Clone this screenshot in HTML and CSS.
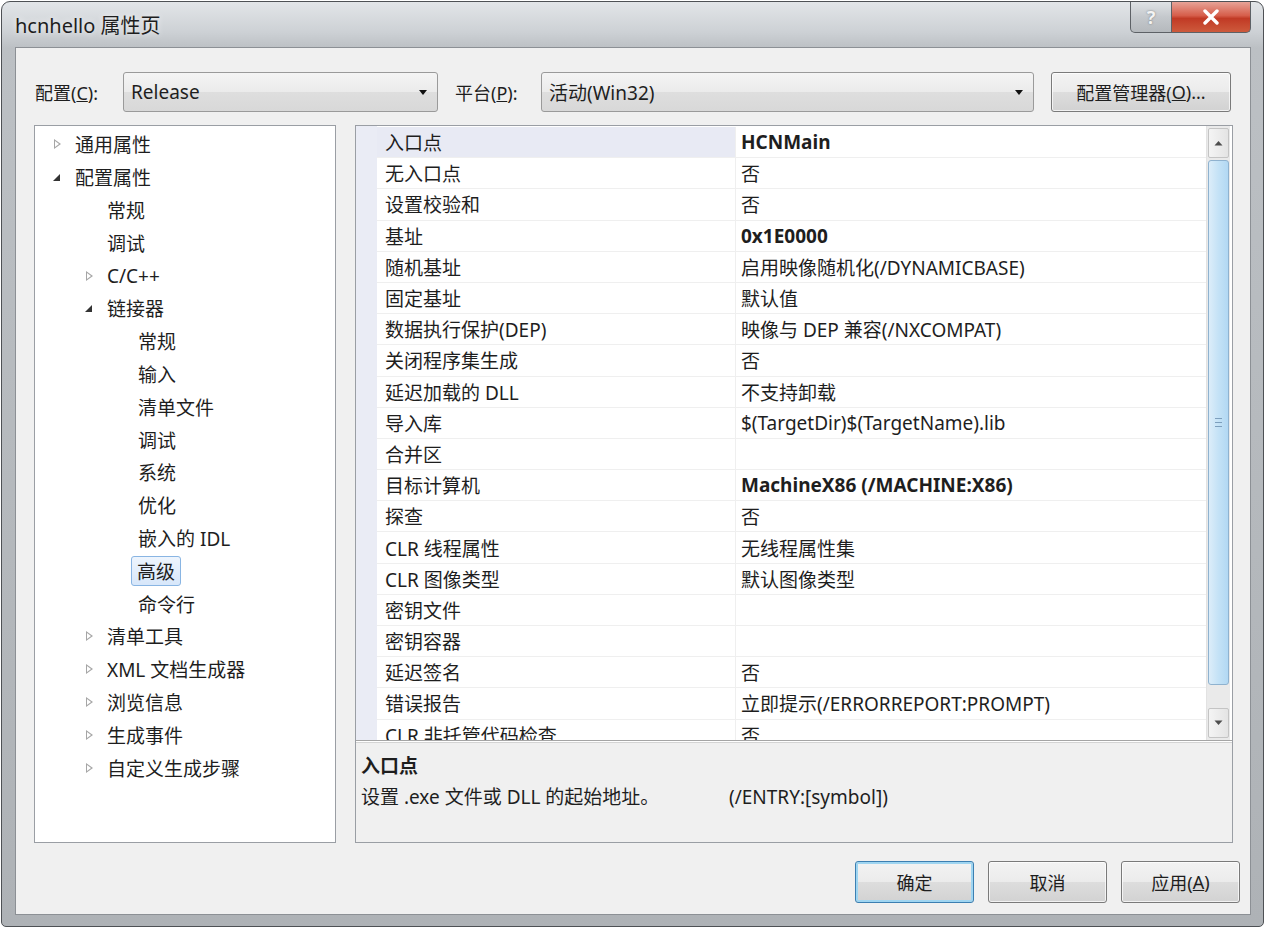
FILE: index.html
```html
<!DOCTYPE html>
<html lang="zh-CN">
<head>
    <meta charset="UTF-8">
    <title>hcnhello 属性页</title>
    <link rel="stylesheet" href="styles.css">
</head>
<body>
    <div class="window">
        <div class="titlebar">
            <div class="title">hcnhello 属性页</div>
            <div class="caption-buttons">
                <div class="cap-btn help">?</div>
                <div class="cap-btn close">
                    <svg width="18" height="16" viewBox="0 0 18 16"><path d="M3 2 L15 14 M15 2 L3 14" stroke="#fff" stroke-width="3.4" stroke-linecap="round"/></svg>
                </div>
            </div>
        </div>

        <div class="client">
            <div class="toolbar">
                <span class="label">配置(<u>C</u>):</span>
                <div class="combo combo-config">
                    <span>Release</span>
                    <span class="combo-arrow"></span>
                </div>
                <span class="label label-platform">平台(<u>P</u>):</span>
                <div class="combo combo-platform">
                    <span>活动(Win32)</span>
                    <span class="combo-arrow"></span>
                </div>
                <div class="button manager">配置管理器(<u>O</u>)...</div>
            </div>

            <div class="main">
                <div class="tree">
                    <div class="node lvl0"><span class="tw closed"></span>通用属性</div>
                    <div class="node lvl0"><span class="tw open"></span>配置属性</div>
                    <div class="node lvl1"><span class="tw"></span>常规</div>
                    <div class="node lvl1"><span class="tw"></span>调试</div>
                    <div class="node lvl1"><span class="tw closed"></span>C/C++</div>
                    <div class="node lvl1"><span class="tw open"></span>链接器</div>
                    <div class="node lvl2"><span class="tw"></span>常规</div>
                    <div class="node lvl2"><span class="tw"></span>输入</div>
                    <div class="node lvl2"><span class="tw"></span>清单文件</div>
                    <div class="node lvl2"><span class="tw"></span>调试</div>
                    <div class="node lvl2"><span class="tw"></span>系统</div>
                    <div class="node lvl2"><span class="tw"></span>优化</div>
                    <div class="node lvl2"><span class="tw"></span>嵌入的 IDL</div>
                    <div class="node lvl2"><span class="tw"></span><span class="selected">高级</span></div>
                    <div class="node lvl2"><span class="tw"></span>命令行</div>
                    <div class="node lvl1"><span class="tw closed"></span>清单工具</div>
                    <div class="node lvl1"><span class="tw closed"></span>XML 文档生成器</div>
                    <div class="node lvl1"><span class="tw closed"></span>浏览信息</div>
                    <div class="node lvl1"><span class="tw closed"></span>生成事件</div>
                    <div class="node lvl1"><span class="tw closed"></span>自定义生成步骤</div>
                </div>

                <div class="props">
                    <div class="grid-area">
                        <div class="grid">
                            <div class="row current"><div class="name">入口点</div><div class="value bold">HCNMain</div></div>
                            <div class="row"><div class="name">无入口点</div><div class="value">否</div></div>
                            <div class="row"><div class="name">设置校验和</div><div class="value">否</div></div>
                            <div class="row"><div class="name">基址</div><div class="value bold">0x1E0000</div></div>
                            <div class="row"><div class="name">随机基址</div><div class="value">启用映像随机化(/DYNAMICBASE)</div></div>
                            <div class="row"><div class="name">固定基址</div><div class="value">默认值</div></div>
                            <div class="row"><div class="name">数据执行保护(DEP)</div><div class="value">映像与 DEP 兼容(/NXCOMPAT)</div></div>
                            <div class="row"><div class="name">关闭程序集生成</div><div class="value">否</div></div>
                            <div class="row"><div class="name">延迟加载的 DLL</div><div class="value">不支持卸载</div></div>
                            <div class="row"><div class="name">导入库</div><div class="value">$(TargetDir)$(TargetName).lib</div></div>
                            <div class="row"><div class="name">合并区</div><div class="value"></div></div>
                            <div class="row"><div class="name">目标计算机</div><div class="value bold">MachineX86 (/MACHINE:X86)</div></div>
                            <div class="row"><div class="name">探查</div><div class="value">否</div></div>
                            <div class="row"><div class="name">CLR 线程属性</div><div class="value">无线程属性集</div></div>
                            <div class="row"><div class="name">CLR 图像类型</div><div class="value">默认图像类型</div></div>
                            <div class="row"><div class="name">密钥文件</div><div class="value"></div></div>
                            <div class="row"><div class="name">密钥容器</div><div class="value"></div></div>
                            <div class="row"><div class="name">延迟签名</div><div class="value">否</div></div>
                            <div class="row"><div class="name">错误报告</div><div class="value">立即提示(/ERRORREPORT:PROMPT)</div></div>
                            <div class="row"><div class="name">CLR 非托管代码检查</div><div class="value">否</div></div>
                        </div>
                        <div class="vscroll">
                            <div class="sb-btn"><svg width="9" height="6" viewBox="0 0 9 6"><path d="M0.5 5.5 L4.5 1 L8.5 5.5 Z" fill="#4d4d4d"/></svg></div>
                            <div class="sb-thumb"><span class="grip"></span></div>
                            <div class="sb-track"></div>
                            <div class="sb-btn"><svg width="9" height="6" viewBox="0 0 9 6"><path d="M0.5 0.5 L4.5 5 L8.5 0.5 Z" fill="#4d4d4d"/></svg></div>
                        </div>
                    </div>
                    <div class="desc">
                        <div class="desc-title">入口点</div>
                        <div class="desc-text"><span class="desc-main">设置 .exe 文件或 DLL 的起始地址。</span>(/ENTRY:[symbol])</div>
                    </div>
                </div>
            </div>

            <div class="footer">
                <div class="button default">确定</div>
                <div class="button">取消</div>
                <div class="button">应用(<u>A</u>)</div>
            </div>
        </div>
    </div>
</body>
</html>
```

FILE: styles.css
```css
body {
    margin: 0;
    background: #ffffff;
    font-family: "Noto Sans", "Noto Sans CJK SC", sans-serif;
    color: #1e1e1e;
}

.window {
    width: 1261px;
    height: 924px;
    margin: 1px 0 0 1px;
    border: 1px solid #4e5155;
    border-radius: 9px 9px 5px 5px;
    background: linear-gradient(to bottom, #e2e5e8 0, #cdd1d5 30px, #bcc0c4 46px, #aeb2b6 100%);
    display: flex;
    flex-direction: column;
}

/* title bar */

.titlebar {
    height: 45px;
    display: flex;
    justify-content: space-between;
    align-items: flex-start;
}

.title {
    padding: 8px 0 0 13px;
    font-size: 20px;
    color: #1d1d1d;
    text-shadow: 0 0 6px rgba(255, 255, 255, 0.9);
}

.caption-buttons {
    display: flex;
    margin-right: 12px;
}

.cap-btn {
    height: 30px;
    border: 1px solid #5d6166;
    border-top: none;
    display: flex;
    justify-content: center;
    align-items: center;
}

.cap-btn.help {
    width: 40px;
    border-radius: 0 0 0 5px;
    background: linear-gradient(to bottom, #dfe2e5, #c4c8cc 50%, #b5b9bd);
    color: #f4f4f4;
    font-size: 18px;
    font-weight: bold;
    text-shadow: 0 0 2px #6e7276;
}

.cap-btn.close {
    width: 78px;
    border-left: none;
    border-radius: 0 0 5px 0;
    background: linear-gradient(to bottom, #e7a397, #d65e4b 45%, #c13a25 55%, #cd5a3c);
}

/* client area */

.client {
    flex: 1;
    margin: 0 12px 11px 13px;
    background: #f0f0f0;
    border: 1px solid #8c9095;
    display: flex;
    flex-direction: column;
    font-size: 19px;
}

.toolbar {
    display: flex;
    align-items: center;
    height: 40px;
    margin: 24px 17px 0 19px;
}

.label {
    width: 88px;
    font-size: 18px;
}

.label-platform {
    width: 86px;
    margin-left: 17px;
}

.combo {
    height: 38px;
    border: 1px solid #9a9a9a;
    border-radius: 3px;
    background: linear-gradient(to bottom, #f4f4f4, #ebebeb 50%, #dedede 51%, #d8d8d8);
    display: flex;
    align-items: center;
    justify-content: space-between;
    padding: 0 10px 0 7px;
    font-size: 19px;
}

.combo-config {
    width: 296px;
}

.combo-platform {
    width: 474px;
    margin-right: 17px;
}

.combo-arrow {
    width: 0;
    height: 0;
    border-left: 4px solid transparent;
    border-right: 4px solid transparent;
    border-top: 5px solid #111;
}

.button {
    height: 39px;
    border: 1px solid #7a7a7a;
    border-radius: 3px;
    background: linear-gradient(to bottom, #f3f3f3, #ebebeb 50%, #dddddd 51%, #d2d2d2);
    box-shadow: inset 0 0 0 1px rgba(255, 255, 255, 0.7);
    display: flex;
    align-items: center;
    justify-content: center;
    font-size: 18px;
    box-sizing: border-box;
}

.manager {
    width: 180px;
    height: 40px;
}

/* main panels */

.main {
    display: flex;
    gap: 19px;
    margin: 13px 17px 0 18px;
    height: 718px;
}

.tree {
    width: 302px;
    background: #fff;
    border: 1px solid #9a9ea4;
    padding-top: 2px;
    box-sizing: border-box;
}

.node {
    height: 32.8px;
    display: flex;
    align-items: center;
    font-size: 19px;
    white-space: nowrap;
}

.lvl0 { padding-left: 16px; }
.lvl1 { padding-left: 48px; }
.lvl2 { padding-left: 79px; }

.tw {
    width: 7px;
    height: 10px;
    margin-right: 17px;
    flex-shrink: 0;
}

.tw.closed {
    width: 0;
    height: 0;
    margin-left: 3px;
    margin-right: 14px;
    border-left: 7px solid #a6a6a6;
    border-top: 5px solid transparent;
    border-bottom: 5px solid transparent;
    position: relative;
}

.tw.closed::after {
    content: "";
    position: absolute;
    left: -6px;
    top: -3px;
    border-left: 4px solid #fff;
    border-top: 3px solid transparent;
    border-bottom: 3px solid transparent;
}

.tw.open {
    width: 0;
    height: 0;
    margin-left: 2px;
    margin-right: 15px;
    border-right: 7px solid #333;
    border-top: 7px solid transparent;
}

.selected {
    margin-left: -7px;
    padding: 0 5px;
    border: 1px solid #89b5e3;
    border-radius: 3px;
    background: linear-gradient(to bottom, #eef5fd, #d7e7fa);
}

/* property grid */

.props {
    flex: 1;
    border: 1px solid #9a9ea4;
    background: #f0f0f0;
    display: flex;
    flex-direction: column;
}

.grid-area {
    height: 614px;
    display: flex;
    background: #fff;
    border-bottom: 1px solid #a5a5a5;
    box-shadow: 0 1px 0 #fff, 0 2px 0 #d4d4d4;
}

.grid {
    flex: 1;
    overflow: hidden;
    padding-top: 1px;
    background: linear-gradient(to right, #eaecf5 21px, #fff 21px);
}

.row {
    height: 31.2px;
    display: flex;
    margin-left: 21px;
    border-bottom: 1px solid #efefef;
    box-sizing: border-box;
    font-size: 19px;
}

.row .name {
    width: 350px;
    padding-left: 8px;
    border-right: 1px solid #efefef;
    display: flex;
    align-items: center;
    white-space: nowrap;
}

.row .value {
    flex: 1;
    padding-left: 5px;
    display: flex;
    align-items: center;
    white-space: nowrap;
}

.row.current .name {
    background: #e8eaf4;
}

.bold {
    font-weight: bold;
}

.vscroll {
    width: 23px;
    margin-right: 2px;
    background: #eaeaea;
    border-left: 1px solid #e2e2e2;
    display: flex;
    flex-direction: column;
}

.sb-btn {
    height: 28px;
    margin: 2px 1px;
    border: 1px solid #c4c4c4;
    border-radius: 2px;
    background: linear-gradient(to right, #f4f4f4, #e4e4e4);
    display: flex;
    align-items: center;
    justify-content: center;
}

.sb-thumb {
    height: 523px;
    margin: 0 1px;
    border: 1px solid #8fb2cf;
    border-radius: 3px;
    background: linear-gradient(to right, #dcedf9, #c4e2f6 50%, #b2d8f3);
    display: flex;
    align-items: center;
    justify-content: center;
}

.grip {
    width: 7px;
    height: 7px;
    border-top: 1px solid #7d9fbd;
    border-bottom: 1px solid #7d9fbd;
    background: linear-gradient(to bottom, transparent 3px, #7d9fbd 3px, #7d9fbd 4px, transparent 4px);
}

.sb-track {
    flex: 1;
}

.desc {
    flex: 1;
    padding: 10px 6px 0 5px;
}

.desc-title {
    font-weight: bold;
    font-size: 19px;
    margin-bottom: 3px;
}

.desc-text {
    font-size: 19px;
    white-space: nowrap;
}

.desc-main {
    display: inline-block;
    width: 368px;
}

/* dialog buttons */

.footer {
    display: flex;
    justify-content: flex-end;
    gap: 14px;
    margin: 18px 10px 0 0;
}

.footer .button {
    width: 119px;
    height: 42px;
}

.button.default {
    border: 1px solid #3c7fb1;
    box-shadow: inset 0 0 0 2px #9fd5f1;
}
```
